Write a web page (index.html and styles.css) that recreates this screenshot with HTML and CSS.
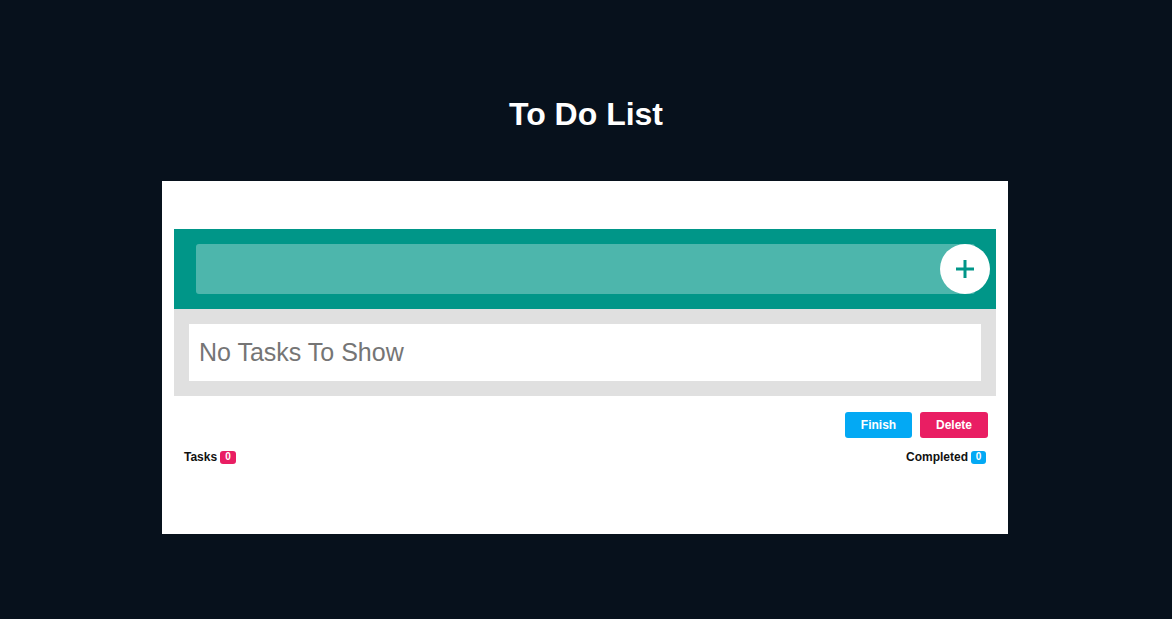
FILE: index.html
```html
<!DOCTYPE html>
<html>
<head>
<meta charset="utf-8">
<link rel="stylesheet" href="styles.css">
</head>
<body>
<h1 class="title">To Do List</h1>
<div class="card">
  <div class="add-bar">
    <div class="add-input"></div>
    <button class="add-btn" aria-label="Add">
      <svg width="20" height="20" viewBox="0 0 20 20"><path d="M10 1v18M1 10h18" stroke="#009688" stroke-width="3" fill="none"/></svg>
    </button>
  </div>
  <div class="list">
    <div class="empty">No Tasks To Show</div>
  </div>
  <div class="actions">
    <button class="btn finish">Finish</button>
    <button class="btn delete">Delete</button>
  </div>
  <div class="stats">
    <div class="stat">Tasks <span class="badge pink">0</span></div>
    <div class="stat">Completed <span class="badge blue">0</span></div>
  </div>
</div>
</body>
</html>
```
FILE: styles.css
```css
html, body {
  margin: 0;
  padding: 0;
  background: #07111c;
  font-family: "Liberation Sans", Arial, sans-serif;
}
.title {
  margin: 0 0 48px;
  padding-top: 96px;
  line-height: 37px;
  font-size: 32px;
  font-weight: bold;
  color: #ffffff;
  text-align: center;
}
.card {
  box-sizing: border-box;
  width: 846px;
  height: 353px;
  margin: 0 0 0 calc(50% - 424px);
  padding: 48px 12px 0;
  background: #ffffff;
}
.add-bar {
  display: flex;
  align-items: center;
  height: 80px;
  box-sizing: border-box;
  padding: 15px 6px 15px 22px;
  background: #009688;
}
.add-input {
  flex: 1;
  height: 50px;
  background: #4db6ac;
  border-radius: 3px;
}
.add-btn {
  width: 50px;
  height: 50px;
  margin-left: -35px;
  border: none;
  border-radius: 50%;
  background: #ffffff;
  padding: 0;
  display: flex;
  align-items: center;
  justify-content: center;
  position: relative;
}
.list {
  background: #e0e0e0;
  padding: 15px;
}
.empty {
  height: 57px;
  background: #ffffff;
  display: flex;
  align-items: center;
  padding-left: 10px;
  font-size: 25px;
  color: #757575;
}
.actions {
  display: flex;
  justify-content: flex-end;
  gap: 8px;
  margin-top: 16px;
  padding-right: 8px;
}
.btn {
  height: 26px;
  border: none;
  border-radius: 3px;
  color: #ffffff;
  font-family: "Liberation Sans", Arial, sans-serif;
  font-weight: bold;
  font-size: 12px;
  padding: 0;
}
.finish { width: 67px; background: #03a9f4; }
.delete { width: 68px; background: #e91e63; }
.stats {
  display: flex;
  justify-content: space-between;
  margin-top: 12px;
  padding: 0 10px;
}
.stat {
  display: flex;
  align-items: center;
  gap: 3px;
  font-size: 12px;
  font-weight: bold;
  color: #111111;
  line-height: 14px;
}
.badge {
  display: inline-flex;
  align-items: center;
  justify-content: center;
  min-width: 16px;
  height: 13px;
  box-sizing: border-box;
  border-radius: 3px;
  color: #ffffff;
  font-size: 10px;
  font-weight: bold;
}
.pink { background: #e91e63; }
.blue { background: #03a9f4; width: 15px; min-width: 15px; }
```
